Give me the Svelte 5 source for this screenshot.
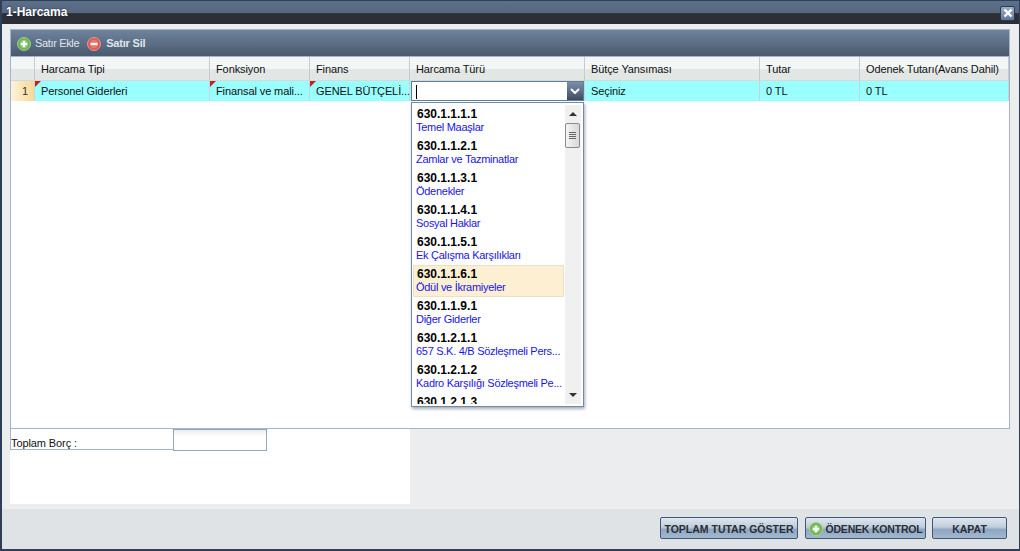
<script>
  const cols = [
    { t: 'Harcama Tipi', v: 'Personel Giderleri', w: 175, flag: true },
    { t: 'Fonksiyon', v: 'Finansal ve mali...', w: 100, flag: true },
    { t: 'Finans', v: 'GENEL BÜTÇELİ...', w: 100, flag: true },
    { t: 'Harcama Türü', v: '', w: 175, combo: true },
    { t: 'Bütçe Yansıması', v: 'Seçiniz', w: 175 },
    { t: 'Tutar', v: '0 TL', w: 100 },
    { t: 'Odenek Tutarı(Avans Dahil)', v: '0 TL', w: 149 }
  ];
  const items = [
    ['630.1.1.1.1', 'Temel Maaşlar'],
    ['630.1.1.2.1', 'Zamlar ve Tazminatlar'],
    ['630.1.1.3.1', 'Ödenekler'],
    ['630.1.1.4.1', 'Sosyal Haklar'],
    ['630.1.1.5.1', 'Ek Çalışma Karşılıkları'],
    ['630.1.1.6.1', 'Ödül ve İkramiyeler'],
    ['630.1.1.9.1', 'Diğer Giderler'],
    ['630.1.2.1.1', '657 S.K. 4/B Sözleşmeli Pers...'],
    ['630.1.2.1.2', 'Kadro Karşılığı Sözleşmeli Pe...'],
    ['630.1.2.1.3', '']
  ];
</script>

{#snippet plus()}
  <svg class="ic" viewBox="0 0 16 16" width="14" height="14">
    <circle cx="8" cy="8" r="7.4" fill="#6fb552" stroke="#a5d693" stroke-width="1" />
    <circle cx="8" cy="8" r="4.8" fill="#8ccb70" />
    <path d="M8 4.4v7.2M4.4 8h7.2" stroke="#fff" stroke-width="2.6" />
  </svg>
{/snippet}

<div class="win">
  <header class="title">
    <span>1-Harcama</span>
    <button class="close" aria-label="Kapat">
      <svg viewBox="0 0 10 10" width="10" height="10"><path d="M1.5 1.5l7 7M8.5 1.5l-7 7" stroke="#fff" stroke-width="2.4" /></svg>
    </button>
  </header>

  <div class="body">
    <section class="panel">
      <div class="toolbar">
        <span class="tool">{@render plus()}<span>Satır Ekle</span></span>
        <span class="tool sil">
          <svg class="ic" viewBox="0 0 16 16" width="14" height="14">
            <circle cx="8" cy="8" r="7.4" fill="#df5b4d" stroke="#f0a096" stroke-width="1" />
            <circle cx="8" cy="8" r="4.8" fill="#ea7a6c" />
            <path d="M4 8h8" stroke="#fff" stroke-width="2.6" />
          </svg>
          <span>Satır Sil</span>
        </span>
      </div>

      <div class="head">
        <div class="hc num"></div>
        {#each cols as c}
          <div class="hc" style="width:{c.w}px">{c.t}</div>
        {/each}
      </div>

      <div class="row">
        <div class="rc num">1</div>
        {#each cols as c}
          <div class="rc" class:flag={c.flag} class:comboc={c.combo} style="width:{c.w}px">
            {#if c.combo}
              <div class="combo">
                <span class="caret"></span>
                <span class="arrow">
                  <svg viewBox="0 0 10 6" width="10" height="6"><path d="M1 1l4 4 4-4" fill="none" stroke="#fff" stroke-width="2" /></svg>
                </span>
              </div>
            {:else}
              {c.v}
            {/if}
          </div>
        {/each}
      </div>

      <div class="dropdown">
        <div class="list">
          {#each items as [code, name], i}
            <div class="item" class:sel={i === 5}>
              <b>{code}</b>
              <span>{name}</span>
            </div>
          {/each}
        </div>
        <div class="scroll">
          <svg class="up" viewBox="0 0 8 4" width="8" height="4"><path d="M4 0l4 4H0z" fill="#333" /></svg>
          <div class="thumb"><i></i><i></i><i></i><i></i></div>
          <svg class="down" viewBox="0 0 8 4" width="8" height="4"><path d="M0 0h8L4 4z" fill="#333" /></svg>
        </div>
      </div>
    </section>

    <div class="form">
      <div class="frow">
        <label for="tb">Toplam Borç :</label>
        <input id="tb" />
      </div>
    </div>
  </div>

  <footer class="foot">
    <button class="btn b1">TOPLAM TUTAR GÖSTER</button>
    <button class="btn b2">{@render plus()}ÖDENEK KONTROL</button>
    <button class="btn b3">KAPAT</button>
  </footer>
</div>

<style>
  :global(body) { margin: 0; background: #ecedef; }
  * { box-sizing: border-box; }
  .win {
    width: 1020px; height: 551px; display: flex; flex-direction: column;
    border: 1px solid #2f3f57; border-width: 1px 1px 2px 2px;
    font: 11px/1 "Liberation Sans", Arial, sans-serif; letter-spacing: -0.1px; color: #111;
    background: #ecedef; overflow: hidden;
  }
  .title {
    height: 23px; flex: none; display: flex; align-items: center; justify-content: space-between;
    padding: 0 4px 0 4px; letter-spacing: 0;
    background: linear-gradient(#5d6f89 0, #56677f 50%, #2c3036 55%, #2b2e33 100%);
    color: #fff; font-weight: 700; font-size: 12px; text-shadow: 0 0 2px #1a2230;
  }
  .title span { margin-top: -1px; }
  .close {
    width: 15px; height: 15px; padding: 0; border: 1px solid #2a3a50; border-radius: 2px;
    background: linear-gradient(#9db0c8, #5f7897); display: flex; align-items: center; justify-content: center;
    margin-top: 1px;
  }
  .body { flex: none; padding: 5px 9px 0 8px; display: flex; flex-direction: column; }
  .panel {
    position: relative; height: 400px; border: 1px solid #a4b5c9; background: #fff; flex: none;
  }
  .toolbar {
    height: 27px; display: flex; align-items: center; padding: 1px 6px 0;
    background: linear-gradient(#6f839d, #4a596e);
    color: #dfe5ec; font-size: 11px; border-bottom: 1px solid #a4b5c9;
  }
  .tool { display: flex; align-items: center; gap: 4px; letter-spacing: -0.35px; }
  .ic { flex: none; }
  .sil { font-weight: 700; gap: 5px; margin-left: 8px; letter-spacing: -0.2px; }
  .head { display: flex; height: 24px; background: linear-gradient(#f3f6f6 0, #f3f6f6 50%, #e2e6e5 50%, #e2e6e5 100%); }
  .hc {
    flex: none; padding: 7px 0 0 6px; border-right: 1px solid #c6cccd; white-space: nowrap;
    border-bottom: 1px solid #d4d9d9;
  }
  .hc.num { width: 24px; }
  .row { display: flex; height: 20px; background: #99ffff; }
  .rc {
    flex: none; padding: 5px 0 0 6px; border-right: 1px solid #c9d4d8; white-space: nowrap; position: relative; overflow: hidden;
  }
  .rc.num {
    width: 24px; text-align: right; padding: 5px 6px 0 0; background: linear-gradient(90deg, #fdf3da, #f8d898); color: #333;
  }
  .flag::before {
    content: ""; position: absolute; left: 0; top: 0; border: 3px solid transparent;
    border-top-color: #c81f1f; border-left-color: #c81f1f;
  }
  .rc.comboc { padding: 0 0 0 1px; overflow: visible; }
  .combo {
    height: 20px; width: 173px; border: 1px solid #5f7c99; background: #fff; display: flex; justify-content: space-between;
  }
  .caret { width: 1px; height: 14px; background: #000; margin: 3px 0 0 4px; }
  .arrow {
    width: 16px; background: linear-gradient(#7b8fa8 0, #5d7088 50%, #3c4b5f 100%);
    display: flex; align-items: center; justify-content: center;
  }
  .dropdown {
    position: absolute; left: 400px; top: 72px; width: 173px; height: 305px;
    border: 1px solid #718aa6; box-shadow: 1px 2px 3px rgba(60, 70, 80, .45);
    background: #fff; overflow: hidden; display: flex; padding: 2px 1px 2px 1px;
  }
  .list { width: 151px; flex: none; overflow: hidden; }
  .item { height: 32px; padding: 2px 0 0 3px; }
  .item.sel { background: #fcefd2; box-shadow: inset 0 0 0 1px #ece0c4; }
  .item b { display: block; font: 700 12px/14px "Liberation Sans", Arial, sans-serif; letter-spacing: 0; color: #000; padding-left: 1px; }
  .item span { display: block; line-height: 13px; color: #1a14e6; white-space: nowrap; letter-spacing: -0.28px; }
  .scroll {
    width: 16px; flex: none; background: #f0f0f0; position: relative; margin-left: 1px;
  }
  .up { position: absolute; left: 4px; top: 7px; }
  .down { position: absolute; left: 4px; bottom: 7px; }
  .thumb {
    position: absolute; left: 0; top: 18px; width: 15px; height: 25px; border: 1px solid #8a8a8a; border-radius: 2px;
    background: linear-gradient(90deg, #f4f4f4, #d8d8d8); display: flex; flex-direction: column; gap: 1px; align-items: center; justify-content: center;
  }
  .thumb i { display: block; width: 7px; height: 1px; background: #666; }
  .form { width: 400px; height: 75px; background: #fff; flex: none; }
  .frow { display: flex; align-items: flex-start; }
  .frow label {
    width: 163px; height: 21px; display: block; padding-top: 8px; border-bottom: 1px solid #a4b5c9; border-left: 1px solid #a4b5c9; line-height: 12px; color: #111;
  }
  .frow input {
    width: 94px; height: 22px; margin: 0; padding: 0; border: 1px solid #94a7bd; background: linear-gradient(#e9ecec, #fff 6px); display: block; outline: 0;
  }
  .foot {
    height: 40px; flex: none; margin-top: 5px; background: #e0e3e6; display: flex; justify-content: flex-end;
    align-items: flex-start; gap: 6px; padding: 8px 12px 0 0;
  }
  .btn {
    height: 22px; padding: 2px 0 0; border: 1px solid #3f5a78; border-radius: 2px; white-space: nowrap;
    background: linear-gradient(#dfe6ee 0, #c1cedd 45%, #8ea7c2 58%, #a4b8cd 100%);
    font: 700 10.5px/1 "Liberation Sans", Arial, sans-serif; color: #2a2f35; display: flex; align-items: center; justify-content: center; gap: 3px; letter-spacing: 0;
  }
  .b1 { width: 138px; margin-right: 1px; }
  .b2 { width: 121px; letter-spacing: -0.2px; }
  .b3 { width: 75px; }
</style>
